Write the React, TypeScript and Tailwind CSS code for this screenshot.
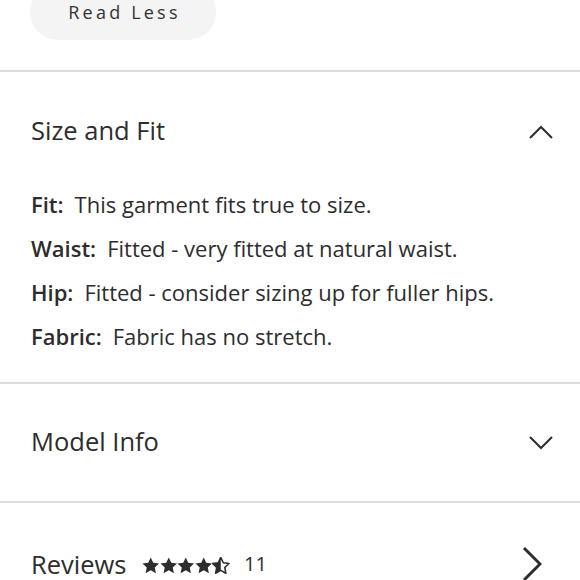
import React from "react";

const font = { fontFamily: "'Open Sans', Lato, Arial, sans-serif" };

function Star({ half }: { half?: boolean }) {
  const d =
    "M12 2.5l2.9 6.1 6.6.8-4.9 4.6 1.3 6.6L12 17.3l-5.9 3.3 1.3-6.6-4.9-4.6 6.6-.8z";
  return (
    <svg width="17.5" height="17" viewBox="2 2 20 19.5">
      {half ? (
        <>
          <defs>
            <clipPath id="lh">
              <rect x="0" y="0" width="12" height="24" />
            </clipPath>
          </defs>
          <path d={d} fill="#2d2d2d" clipPath="url(#lh)" />
          <path d={d} fill="none" stroke="#2d2d2d" strokeWidth="1.8" strokeLinejoin="round" />
        </>
      ) : (
        <path d={d} fill="#2d2d2d" />
      )}
    </svg>
  );
}

function Row({ label, text }: { label: string; text: string }) {
  return (
    <div className="h-[44px] flex items-center text-[22px] text-[#2d2d2d]">
      <span className="font-semibold">{label}</span>
      <span className="ml-[11px]">{text}</span>
    </div>
  );
}

export default function App() {
  return (
    <div className="w-[580px] h-[580px] overflow-hidden bg-white text-[#2d2d2d]" style={font}>
      <div className="px-[30px] pb-[30px]">
        <div className="-mt-[16px] w-[186px] h-[56px] rounded-full bg-[#f4f4f4] flex items-center justify-center">
          <span className="text-[18px] tracking-[3.2px] text-[#333] mt-[1px] pl-[3px]">Read Less</span>
        </div>
      </div>
      <div className="h-[2px] bg-[#dcdcdc]" />
      <div className="h-[120px] flex items-center justify-between pl-[31px] pr-[27px]">
        <span className="text-[25.5px] -mt-[4px]">Size and Fit</span>
        <svg width="24" height="14" viewBox="0 0 24 14" fill="none" stroke="#2d2d2d" strokeWidth="2">
          <path d="M1 13L12 2l11 11" />
        </svg>
      </div>
      <div className="pl-[31px] -mt-[10px] pb-[24px]">
        <Row label="Fit:" text="This garment fits true to size." />
        <Row label="Waist:" text="Fitted - very fitted at natural waist." />
        <Row label="Hip:" text="Fitted - consider sizing up for fuller hips." />
        <Row label="Fabric:" text="Fabric has no stretch." />
      </div>
      <div className="h-[2px] bg-[#dcdcdc]" />
      <div className="h-[117px] flex items-center justify-between pl-[31px] pr-[27px]">
        <span className="text-[25.5px] -mt-[2px]">Model Info</span>
        <svg width="24" height="14" viewBox="0 0 24 14" fill="none" stroke="#2d2d2d" strokeWidth="2">
          <path d="M1 1l11 11L23 1" />
        </svg>
      </div>
      <div className="h-[2px] bg-[#dcdcdc]" />
      <div className="h-[122px] flex items-center justify-between pl-[31px] pr-[38px]">
        <div className="flex items-center">
          <span className="text-[25.5px]">Reviews</span>
          <div className="flex ml-[16px] mt-[2px]">
            <Star />
            <Star />
            <Star />
            <Star />
            <Star half />
          </div>
          <span className="ml-[14px] text-[20px]">11</span>
        </div>
        <svg width="20" height="36" viewBox="0 0 20 36" fill="none" stroke="#2d2d2d" strokeWidth="3">
          <path d="M2 2l16 16L2 34" />
        </svg>
      </div>
    </div>
  );
}
